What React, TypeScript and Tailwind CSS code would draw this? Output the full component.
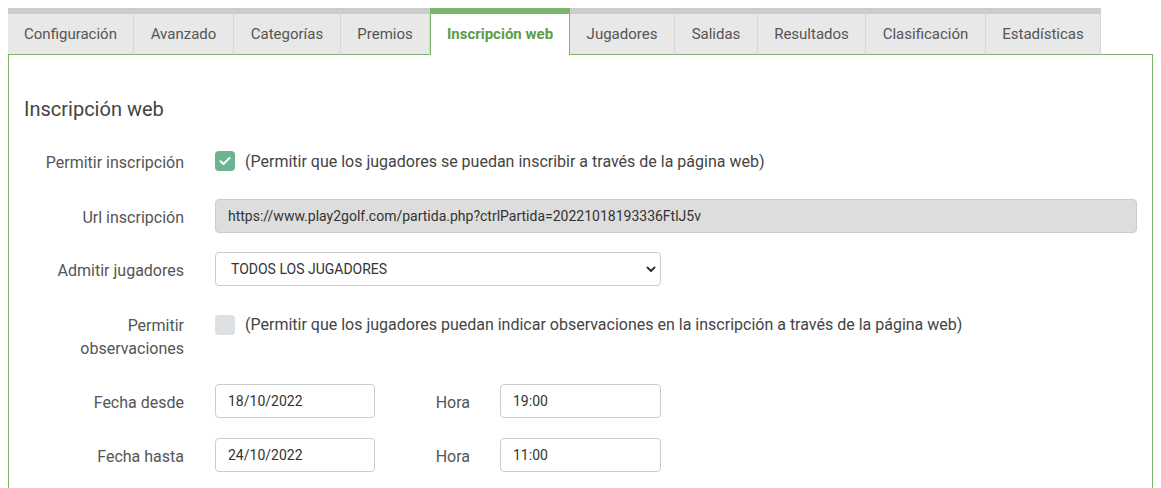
import React from 'react';

const tabs = [
  { label: 'Configuración', w: 'w-[126px]' },
  { label: 'Avanzado', w: 'w-[100px]' },
  { label: 'Categorías', w: 'w-[107px]' },
  { label: 'Premios', w: 'w-[89px]' },
  { label: 'Inscripción web', w: 'w-[140px]', active: true },
  { label: 'Jugadores', w: 'w-[105px]' },
  { label: 'Salidas', w: 'w-[83px]' },
  { label: 'Resultados', w: 'w-[108px]' },
  { label: 'Clasificación', w: 'w-[120px]' },
  { label: 'Estadísticas', w: 'w-[115px]' },
];

const Label = ({ children, className = 'pt-[3px]' }: { children: React.ReactNode; className?: string }) => (
  <div className={`w-[160px] shrink-0 text-right text-[16px] text-[#555] ${className}`}>{children}</div>
);

const TextBox = ({ value, className = '' }: { value: string; className?: string }) => (
  <div className={`h-[34px] w-[160px] flex items-center px-3 border border-[#ccc] rounded-[4px] bg-white text-[14px] text-[#333] ${className}`}>
    {value}
  </div>
);

const App = () => {
  return (
    <div className="min-h-screen bg-white pt-2 px-2 font-['Roboto',sans-serif]">
      {/* Tabs */}
      <div className="flex h-[47px]">
        {tabs.map((t) =>
          t.active ? (
            <div
              key={t.label}
              className={`${t.w} shrink-0 flex items-center justify-center bg-white border-t-[6px] border-x border-[#7db46c] text-[15px] font-bold text-[#5e9b47]`}
            >
              {t.label}
            </div>
          ) : (
            <div
              key={t.label}
              className={`${t.w} shrink-0 flex items-center justify-center bg-[#e8e8e8] border-t-[6px] border-t-[#cccccc] border-r border-r-[#d6d6d6] border-b border-b-[#7db46c] text-[15px] text-[#555]`}
            >
              {t.label}
            </div>
          )
        )}
        <div className="flex-1 border-b border-[#7db46c]" />
      </div>

      {/* Panel */}
      <div className="border-x border-b border-[#7db46c] px-[15px] pb-8 min-h-[440px]">
        <h2 className="pt-[40px] text-[20px] leading-[28px] text-[#444]">Inscripción web</h2>

        <div className="mt-[21px] flex items-center h-[34px] gap-[31px]">
          <Label>Permitir inscripción</Label>
          <div className="flex items-center gap-[10px]">
            <div className="w-[20px] h-[20px] rounded-[4px] bg-[#6bb391] flex items-center justify-center">
              <svg width="12" height="10" viewBox="0 0 12 10" fill="none">
                <path d="M1.5 5.2L4.5 8L10.5 2" stroke="white" strokeWidth="2" strokeLinecap="round" strokeLinejoin="round" />
              </svg>
            </div>
            <span className="text-[16px] text-[#444] pt-[1px]">(Permitir que los jugadores se puedan inscribir a través de la página web)</span>
          </div>
        </div>

        <div className="mt-[21px] flex items-center h-[34px] gap-[31px]">
          <Label>Url inscripción</Label>
          <div className="flex-1 h-[34px] flex items-center px-3 border border-[#ccc] rounded-[4px] bg-[#dddddd] text-[14px] text-[#333]">
            https://www.play2golf.com/partida.php?ctrlPartida=20221018193336FtlJ5v
          </div>
        </div>

        <div className="mt-[19px] flex items-center h-[34px] gap-[31px]">
          <Label>Admitir jugadores</Label>
          <div className="w-[446px] h-[34px] flex items-center justify-between pl-[15px] pr-[4px] border border-[#ccc] rounded-[4px] bg-white text-[14px] text-[#333]">
            <span>TODOS LOS JUGADORES</span>
            <svg width="10" height="7" viewBox="0 0 10 7" fill="none">
              <path d="M1.5 1.5L5 5L8.5 1.5" stroke="#333" strokeWidth="2" strokeLinecap="round" strokeLinejoin="round" />
            </svg>
          </div>
        </div>

        <div className="mt-[28px] flex items-start gap-[31px]">
          <Label className="leading-[23px]">
            Permitir
            <br />
            observaciones
          </Label>
          <div className="flex items-center gap-[10px] h-[22px]">
            <div className="w-[20px] h-[20px] rounded-[4px] bg-[#dde0e3]" />
            <span className="text-[16px] text-[#444]">
              (Permitir que los jugadores puedan indicar observaciones en la inscripción a través de la página web)
            </span>
          </div>
        </div>

        <div className="mt-[24px] flex items-center h-[34px] gap-[31px]">
          <Label>Fecha desde</Label>
          <div className="flex items-center">
            <TextBox value="18/10/2022" />
            <div className="w-[95px] pt-[3px] text-right text-[16px] text-[#555]">Hora</div>
            <TextBox value="19:00" className="ml-[30px] w-[161px]" />
          </div>
        </div>

        <div className="mt-[20px] flex items-center h-[34px] gap-[31px]">
          <Label>Fecha hasta</Label>
          <div className="flex items-center">
            <TextBox value="24/10/2022" />
            <div className="w-[95px] pt-[3px] text-right text-[16px] text-[#555]">Hora</div>
            <TextBox value="11:00" className="ml-[30px] w-[161px]" />
          </div>
        </div>
      </div>
    </div>
  );
};

export default App;
